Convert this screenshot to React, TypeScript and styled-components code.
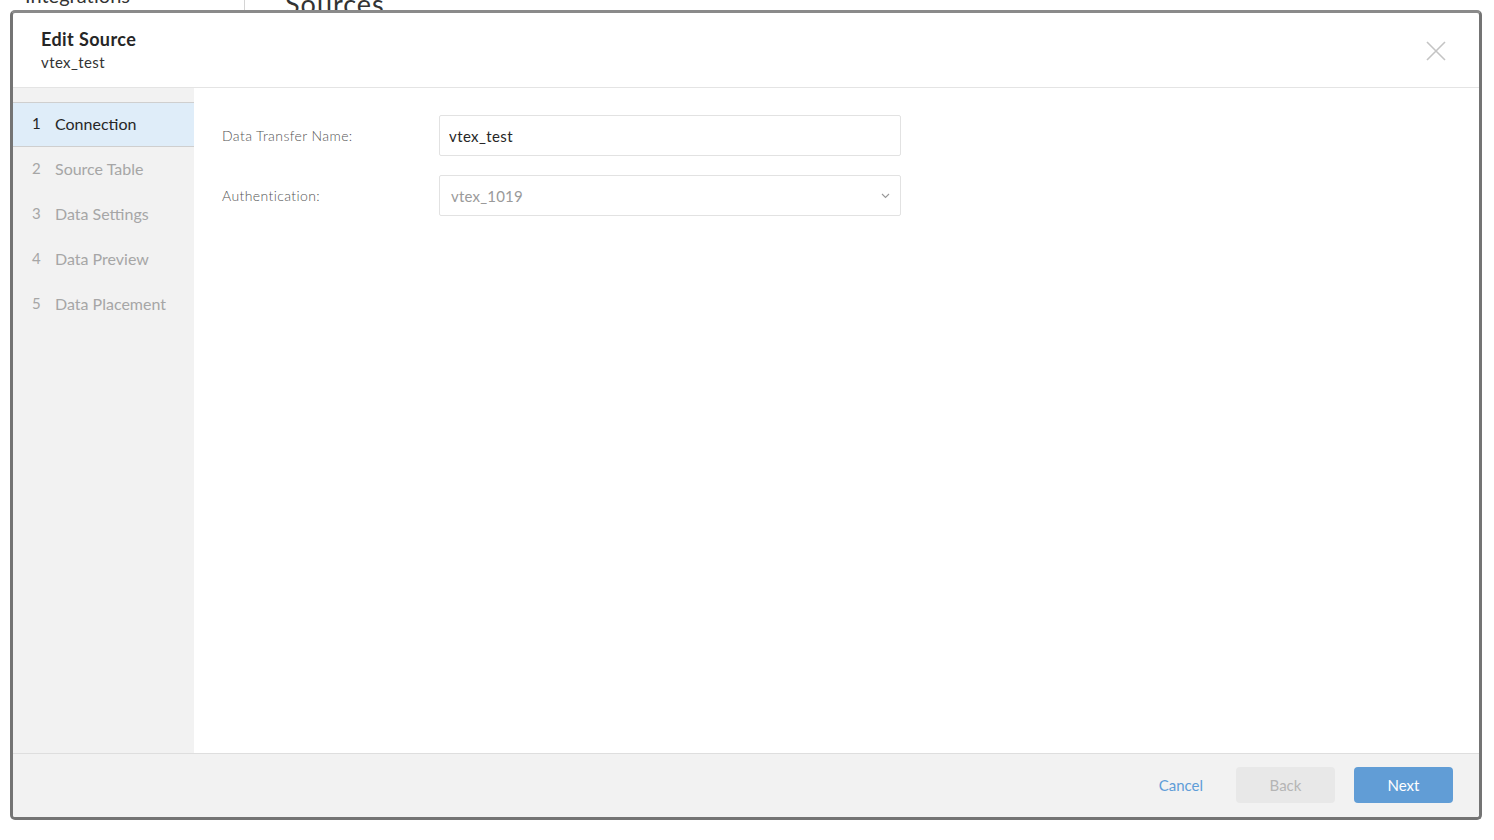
import styled, { createGlobalStyle } from 'styled-components';

const GlobalStyle = createGlobalStyle`
  html, body {
    margin: 0;
    padding: 0;
    background: #ffffff;
    font-family: Lato, "Open Sans", "Liberation Sans", sans-serif;
    overflow: hidden;
  }
  * {
    box-sizing: border-box;
  }
`;

const Page = styled.div`
  width: 1494px;
  height: 840px;
  position: relative;
  overflow: hidden;
`;

// the page behind the modal, only its lowest sliver shows above the dialog
const BackdropBar = styled.div`
  display: flex;
  align-items: flex-end;
  height: 10px;
  overflow: hidden;
  color: #333;
`;

const BackdropNav = styled.div`
  width: 245px;
  height: 10px;
  padding-left: 25px;
  border-right: 1px solid #d4d4d4;
  display: flex;
  align-items: flex-end;
`;

const BackdropNavText = styled.span`
  font-size: 20px;
  line-height: 20px;
  margin-bottom: 5px;
  white-space: nowrap;
`;

const BackdropTitle = styled.div`
  padding-left: 40px;
  font-size: 27px;
  line-height: 27px;
  margin-bottom: -7px;
  letter-spacing: 1px;
  white-space: nowrap;
`;

const Modal = styled.div`
  position: absolute;
  top: 10px;
  left: 10px;
  width: 1472px;
  height: 810px;
  border: 3px solid #747474;
  border-top-color: #8a8a8a;
  border-radius: 5px;
  background: #fff;
  display: flex;
  flex-direction: column;
  overflow: hidden;
`;

const Header = styled.header`
  height: 75px;
  padding: 15px 28px 0 28px;
  border-bottom: 1px solid #e4e4e4;
  display: flex;
  justify-content: space-between;
  align-items: flex-start;
`;

const TitleBlock = styled.div`
  display: flex;
  flex-direction: column;
  gap: 2px;
`;

const Title = styled.h2`
  margin: 0;
  font-size: 18px;
  line-height: 22px;
  font-weight: 700;
  letter-spacing: 0.4px;
  color: #262626;
`;

const Subtitle = styled.div`
  font-size: 15px;
  line-height: 20px;
  letter-spacing: 0.4px;
  color: #333;
`;

const CloseButton = styled.button`
  border: none;
  background: transparent;
  padding: 0;
  margin-top: 12px;
  margin-right: 4px;
  width: 22px;
  height: 22px;
  display: flex;
  align-items: center;
  justify-content: center;
  cursor: pointer;
`;

const Body = styled.div`
  flex: 1;
  display: flex;
  min-height: 0;
`;

const Sidebar = styled.nav`
  width: 181px;
  background: #f2f2f2;
  padding-top: 14px;
  display: flex;
  flex-direction: column;
`;

const Step = styled.div<{ $active?: boolean }>`
  height: 45px;
  display: flex;
  align-items: center;
  gap: 14px;
  padding-left: 19px;
  padding-bottom: 3px;
  font-size: 16px;
  border-top: 1px solid ${(p) => (p.$active ? '#cfcfcf' : 'transparent')};
  border-bottom: 1px solid ${(p) => (p.$active ? '#cfcfcf' : 'transparent')};
  background: ${(p) => (p.$active ? '#dfedf9' : 'transparent')};
  color: ${(p) => (p.$active ? '#262626' : '#a6a6a6')};
`;

const StepNumber = styled.span`
  width: 9px;
  text-align: left;
  font-size: 15px;
`;

const Content = styled.div`
  flex: 1;
  padding: 27px 28px;
  display: flex;
  flex-direction: column;
  gap: 19px;
`;

const FieldRow = styled.div`
  display: flex;
  align-items: center;
`;

const Label = styled.label`
  width: 217px;
  font-size: 14px;
  font-weight: 300;
  letter-spacing: 0.4px;
  color: #555;
  padding-bottom: 1px;
`;

const TextInput = styled.input`
  width: 462px;
  height: 41px;
  border: 1px solid #e2e2e2;
  border-radius: 2px;
  padding: 0 9px;
  font-family: inherit;
  font-size: 15px;
  letter-spacing: 0.4px;
  color: #262626;
  outline: none;
`;

const SelectBox = styled.div`
  width: 462px;
  height: 41px;
  border: 1px solid #e2e2e2;
  border-radius: 2px;
  padding: 0 10px 0 11px;
  display: flex;
  align-items: center;
  justify-content: space-between;
  font-size: 15px;
  letter-spacing: 0.2px;
  color: #9a9a9a;
`;

const Footer = styled.footer`
  height: 64px;
  background: #f2f2f2;
  border-top: 1px solid #dedede;
  display: flex;
  align-items: center;
  justify-content: flex-end;
  padding-right: 26px;
  padding-bottom: 2px;
  gap: 19px;
`;

const LinkButton = styled.button`
  border: none;
  background: transparent;
  font-family: inherit;
  font-size: 15px;
  color: #5f9dd8;
  margin-right: 8px;
  cursor: pointer;
`;

const Button = styled.button<{ $primary?: boolean }>`
  width: 99px;
  height: 36px;
  border-radius: 4px;
  border: none;
  font-family: inherit;
  font-size: 15px;
  background: ${(p) => (p.$primary ? '#619dd6' : '#e8e8e8')};
  color: ${(p) => (p.$primary ? '#ffffff' : '#b5b5b5')};
  cursor: ${(p) => (p.$primary ? 'pointer' : 'default')};
`;

const steps = ['Connection', 'Source Table', 'Data Settings', 'Data Preview', 'Data Placement'];

export default function App() {
  return (
    <Page>
      <GlobalStyle />
      <BackdropBar>
        <BackdropNav>
          <BackdropNavText>Integrations</BackdropNavText>
        </BackdropNav>
        <BackdropTitle>Sources</BackdropTitle>
      </BackdropBar>
      <Modal>
        <Header>
          <TitleBlock>
            <Title>Edit Source</Title>
            <Subtitle>vtex_test</Subtitle>
          </TitleBlock>
          <CloseButton aria-label="Close">
            <svg width="20" height="20" viewBox="0 0 20 20">
              <path d="M1 1 L19 19 M19 1 L1 19" stroke="#c4c4c4" strokeWidth="1.6" fill="none" />
            </svg>
          </CloseButton>
        </Header>
        <Body>
          <Sidebar>
            {steps.map((s, i) => (
              <Step key={s} $active={i === 0}>
                <StepNumber>{i + 1}</StepNumber>
                <span>{s}</span>
              </Step>
            ))}
          </Sidebar>
          <Content>
            <FieldRow>
              <Label>Data Transfer Name:</Label>
              <TextInput defaultValue="vtex_test" />
            </FieldRow>
            <FieldRow>
              <Label>Authentication:</Label>
              <SelectBox>
                <span>vtex_1019</span>
                <svg width="9" height="6" viewBox="0 0 9 6">
                  <path d="M1 1 L4.5 4.5 L8 1" stroke="#999" strokeWidth="1.1" fill="none" />
                </svg>
              </SelectBox>
            </FieldRow>
          </Content>
        </Body>
        <Footer>
          <LinkButton>Cancel</LinkButton>
          <Button>Back</Button>
          <Button $primary>Next</Button>
        </Footer>
      </Modal>
    </Page>
  );
}
